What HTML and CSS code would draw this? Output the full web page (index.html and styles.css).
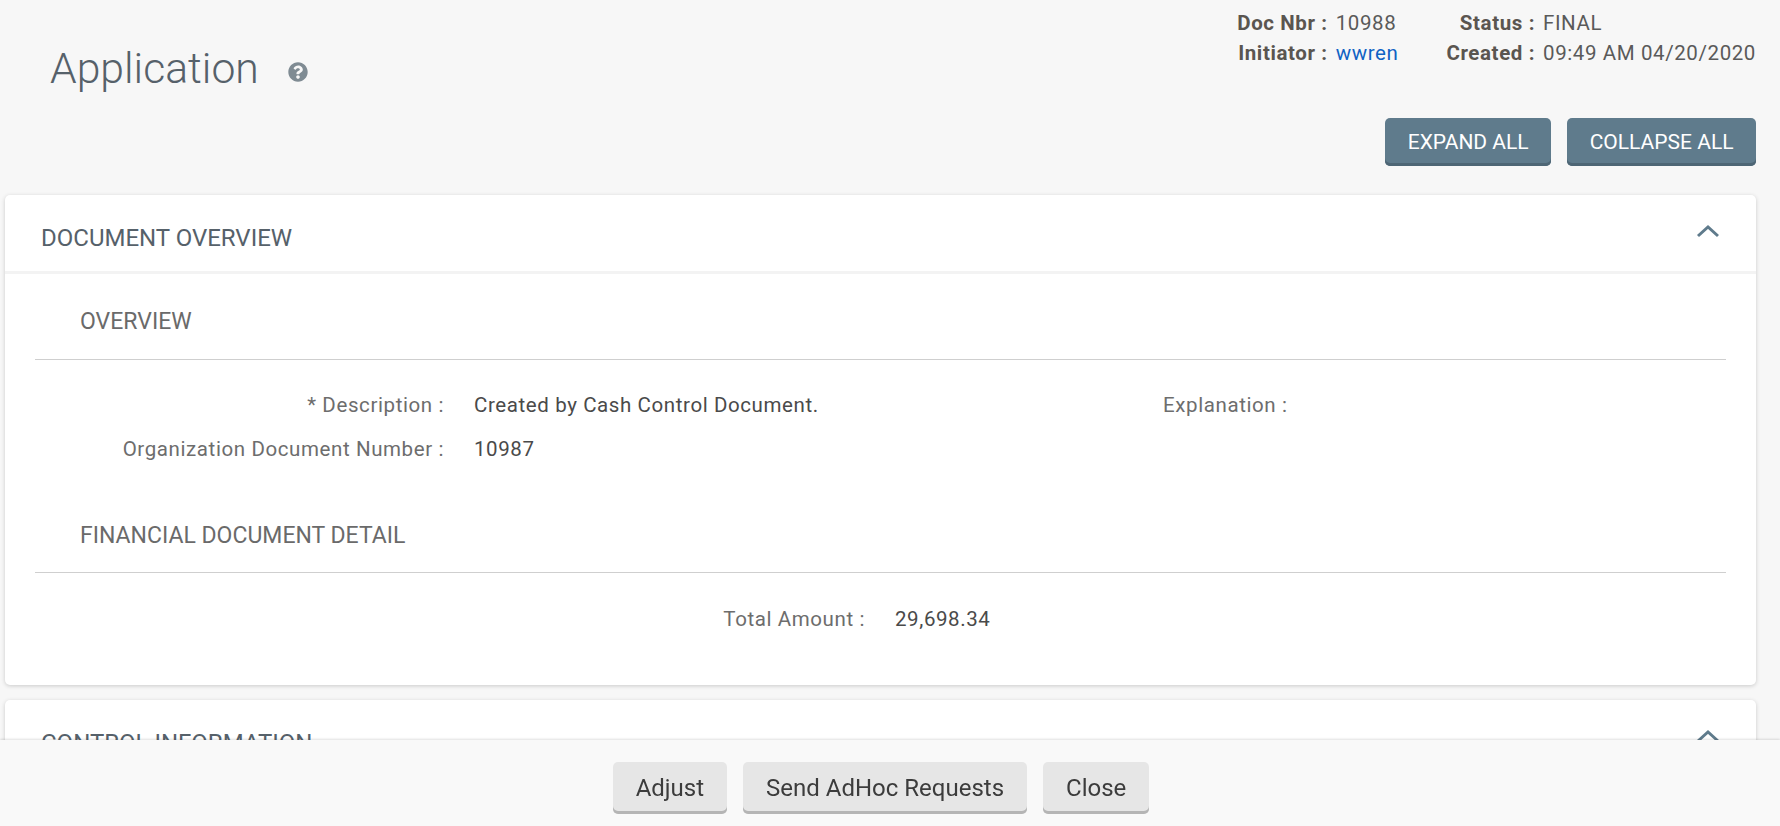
FILE: index.html
```html
<!DOCTYPE html>
<html lang="en">
<head>
<meta charset="utf-8">
<title>Application</title>
<link rel="stylesheet" href="styles.css">
</head>
<body>
<main class="page">
  <header class="page-head">
    <div class="title-wrap">
      <h1 class="title">Application</h1>
      <svg class="help" viewBox="0 0 512 512" width="20" height="20" aria-hidden="true"><path fill="#7f8b93" d="M504 256c0 137-111 248-248 248S8 393 8 256 119 8 256 8s248 111 248 248zM262.700 90c-54.500 0-89.300 23-116.600 63.800-3.500 5.300-2.400 12.400 2.700 16.300l34.700 26.300c5.200 3.900 12.600 3 16.700-2.100 17.900-22.700 30.100-35.800 57.300-35.800 20.400 0 45.700 13.100 45.700 32.900 0 15-12.400 22.700-32.500 34-23.500 13.200-54.600 29.600-54.600 70.600V300c0 6.600 5.400 12 12 12h56c6.600 0 12-5.400 12-12v-1.300c0-28.400 83-29.600 83-106.700 0-58-60.200-102-116.400-102zM256 338c-25.400 0-46 20.600-46 46s20.600 46 46 46 46-20.600 46-46-20.600-46-46-46z"/></svg>
    </div>
    <div class="head-right">
      <div class="meta">
        <span class="meta-label">Doc Nbr :</span><span class="meta-value">10988</span>
        <span class="meta-label">Status :</span><span class="meta-value">FINAL</span>
        <span class="meta-label">Initiator :</span><a class="meta-link" href="#">wwren</a>
        <span class="meta-label">Created :</span><span class="meta-value">09:49 AM 04/20/2020</span>
      </div>
      <div class="head-actions">
        <button class="btn btn-primary" type="button">EXPAND ALL</button>
        <button class="btn btn-primary" type="button">COLLAPSE ALL</button>
      </div>
    </div>
  </header>

  <section class="card">
    <div class="card-head">
      <h2 class="card-title">DOCUMENT OVERVIEW</h2>
      <svg class="chevron" viewBox="0 0 24 14" width="24" height="14" aria-hidden="true"><path d="M2 12 12 3l10 9" fill="none" stroke="#5f7b8c" stroke-width="3"/></svg>
    </div>
    <div class="card-body">
      <h3 class="section-title">OVERVIEW</h3>
      <div class="fields">
        <div class="field-label">* Description :</div>
        <div class="field-value">Created by Cash Control Document.</div>
        <div class="field-label">Explanation :</div>
        <div class="field-value"></div>
        <div class="field-label">Organization Document Number :</div>
        <div class="field-value">10987</div>
      </div>
      <h3 class="section-title section-second">FINANCIAL DOCUMENT DETAIL</h3>
      <div class="total">
        <div class="field-label">Total Amount :</div>
        <div class="field-value">29,698.34</div>
      </div>
    </div>
  </section>

  <section class="card">
    <div class="card-head">
      <h2 class="card-title">CONTROL INFORMATION</h2>
      <svg class="chevron" viewBox="0 0 24 14" width="24" height="14" aria-hidden="true"><path d="M2 12 12 3l10 9" fill="none" stroke="#5f7b8c" stroke-width="3"/></svg>
    </div>
  </section>
</main>

<footer class="footer">
  <button class="btn btn-light" type="button">Adjust</button>
  <button class="btn btn-light" type="button">Send AdHoc Requests</button>
  <button class="btn btn-light" type="button">Close</button>
</footer>
</body>
</html>
```

FILE: styles.css
```css
* { box-sizing: border-box; }
html, body { height: 100%; margin: 0; }
body {
  background: #f7f7f7;
  font-family: Roboto, "Liberation Sans", sans-serif;
  color: #555;
  overflow: hidden;
}
.page { padding: 0 24px 0 5px; }
.page-head { display: flex; justify-content: space-between; height: 195px; }
.title-wrap { display: flex; align-items: center; gap: 29px; padding: 43px 0 0 45px; height: 92px; }
.title { margin: 0; font-size: 42.700px; font-weight: 300; color: #56616a; line-height: 40px; }
.help { margin-top: 9px; }
.head-right { display: flex; flex-direction: column; align-items: flex-end; padding-top: 12px; }
.meta {
  display: grid;
  grid-template-columns: auto auto auto auto;
  column-gap: 8px;
  row-gap: 7px;
  font-size: 20.500px;
  line-height: 22.500px;
  letter-spacing: 0.600px;
}
.meta-label { font-weight: 700; text-align: right; color: #5a5550; }
.meta-value { color: #5a5a5a; }
.meta-link { color: #0f62c4; text-decoration: none; }
.meta-value:nth-child(2), .meta-link { margin-right: 40px; }
.head-actions { display: flex; gap: 16px; margin-top: 54px; }
.btn {
  font-family: inherit;
  font-size: 21px;
  border: 0;
  border-radius: 5px;
  height: 48px;
  padding: 0 22.500px;
  cursor: pointer;
}
.btn-primary { background: #5f7b8c; color: #fff; box-shadow: inset 0 -3px 0 #4e6675; }
.btn-light { background: #e6e6e6; color: #3c3c3c; box-shadow: inset 0 -3px 0 #b5b5b5; font-size: 24px; padding: 0 23px; }
.card {
  background: #fff;
  border-radius: 5px;
  box-shadow: 0 1px 4px rgba(0, 0, 0, .18);
  margin-bottom: 15px;
}
.card-head {
  display: flex;
  justify-content: space-between;
  align-items: center;
  height: 79px;
  padding: 9px 36px 0;
  border-bottom: 3px solid #f3f3f3;
}
.card-title { margin: 0; font-size: 24px; font-weight: 400; color: #56616a; }
.chevron { margin-top: -14px; }
.card-body { padding: 0 30px 30px; height: 411px; }
.section-title {
  margin: 0;
  padding: 0 0 23px 45px;
  font-size: 23px;
  font-weight: 400;
  color: #6a6a6a;
  border-bottom: 1px solid #cfcfcf;
  line-height: 28px;
}
.card-body > .section-title:first-child { padding-top: 34px; }
.fields {
  display: grid;
  grid-template-columns: 409px 1fr 375px 1fr;
  column-gap: 30px;
  row-gap: 18px;
  padding-top: 32px;
  font-size: 20.500px;
  line-height: 26px;
  letter-spacing: 0.600px;
}
.field-label { text-align: right; color: #6d6d6d; }
.field-value { color: #4a4a4a; }
.section-second { margin-top: 60px; padding-bottom: 22px; }
.total {
  display: grid;
  grid-template-columns: 830px 1fr;
  column-gap: 30px;
  padding-top: 33px;
  font-size: 20.500px;
  line-height: 26px;
  letter-spacing: 0.600px;
}
.footer {
  position: fixed;
  left: 0;
  right: 0;
  bottom: 0;
  height: 86px;
  background: #f9f9f9;
  box-shadow: 0 -1px 2px rgba(0, 0, 0, .12);
  display: flex;
  justify-content: center;
  gap: 16px;
  padding: 22px 18px 0 0;
}
.footer .btn { height: 52px; }
```
